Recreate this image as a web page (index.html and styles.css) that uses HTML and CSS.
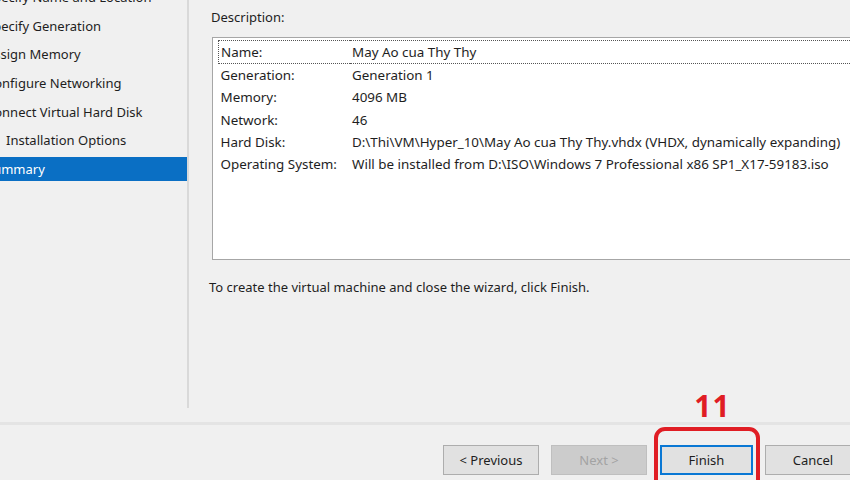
FILE: index.html
```html
<!DOCTYPE html>
<html lang="en">
<head>
    <meta charset="UTF-8">
    <title>New Virtual Machine Wizard - Summary</title>
    <link rel="stylesheet" href="styles.css">
</head>
<body>
    <div class="wizard">
        <div class="main">
            <!-- steps list -->
            <ul class="steps">
                <li class="first">Specify Name and Location</li>
                <li>Specify Generation</li>
                <li>Assign Memory</li>
                <li>Configure Networking</li>
                <li>Connect Virtual Hard Disk</li>
                <li class="indent">Installation Options</li>
                <li class="selected">Summary</li>
            </ul>

            <div class="content">
                <p class="label">Description:</p>
                <div class="summary-box">
                    <table class="summary">
                        <tr class="focused">
                            <td>Name:</td>
                            <td>May Ao cua Thy Thy</td>
                        </tr>
                        <tr>
                            <td>Generation:</td>
                            <td>Generation 1</td>
                        </tr>
                        <tr>
                            <td>Memory:</td>
                            <td>4096 MB</td>
                        </tr>
                        <tr>
                            <td>Network:</td>
                            <td>46</td>
                        </tr>
                        <tr>
                            <td>Hard Disk:</td>
                            <td>D:\Thi\VM\Hyper_10\May Ao cua Thy Thy.vhdx (VHDX, dynamically expanding)</td>
                        </tr>
                        <tr>
                            <td>Operating System:</td>
                            <td>Will be installed from D:\ISO\Windows 7 Professional x86 SP1_X17-59183.iso</td>
                        </tr>
                    </table>
                </div>
                <p class="hint">To create the virtual machine and close the wizard, click Finish.</p>
            </div>
        </div>

        <div class="footer">
            <button type="button">&lt; Previous</button>
            <button type="button" disabled>Next &gt;</button>
            <div class="marked">
                <span class="step-no">11</span>
                <button type="button" class="default">Finish</button>
            </div>
            <button type="button">Cancel</button>
        </div>
    </div>
</body>
</html>
```

FILE: styles.css
```css
body {
    margin: 0;
    background-color: #f0f0f0;
    font-family: "Noto Sans", "Open Sans", sans-serif;
    font-size: 13px;
    color: #1e1e1e;
    overflow: hidden;
}

.wizard {
    width: 850px;
    height: 480px;
    display: flex;
    flex-direction: column;
    overflow: hidden;
}

.main {
    display: flex;
    height: 408px;
    flex-shrink: 0;
}

/* 左側のステップ一覧 */
.steps {
    list-style: none;
    margin: 0;
    padding: 0;
    width: 187px;
    border-right: 2px solid #d9d9d9;
    overflow: hidden;
    margin-top: -17px;
    padding-bottom: 17px;
}

.steps li {
    height: 28.7px;
    line-height: 28.7px;
    margin-left: -14px;
    padding-left: 0;
    white-space: nowrap;
}

.steps li.indent {
    padding-left: 20px;
}

.steps li.selected {
    background-color: #0a6fc4;
    color: #fff;
    height: 24px;
    line-height: 24px;
    margin-top: 2px;
}

.content {
    flex: 1;
    padding-left: 22px;
    overflow: hidden;
}

.label {
    margin: 8px 0 0 0;
    line-height: 18px;
}

.summary-box {
    margin-top: 11px;
    margin-left: 1px;
    height: 219px;
    background-color: #fff;
    border: 1px solid #a6a6a6;
    border-right: none;
    padding: 2px 0 0 5px;
}

.summary {
    width: 100%;
    border-collapse: collapse;
    white-space: nowrap;
    font-size: 13.4px;
}

.summary td {
    height: 22.2px;
    padding: 0 0 0 2px;
    vertical-align: middle;
}

.summary td:first-child {
    width: 129px;
}

.summary tr.focused td {
    border-top: 1px dotted #555;
    border-bottom: 1px dotted #555;
}

.summary tr.focused td:first-child {
    border-left: 1px dotted #555;
}

.hint {
    margin: 18px 0 0 -2px;
    line-height: 18px;
}

/* 下部のボタン */
.footer {
    margin-top: 14px;
    border-top: 3px solid #e4e4e4;
    display: flex;
    justify-content: flex-end;
    align-items: flex-start;
    gap: 12px;
    padding-top: 20px;
    margin-right: -11px;
}

.footer button {
    width: 96px;
    height: 30px;
    font-family: inherit;
    font-size: 13px;
    color: #1e1e1e;
    background-color: #e1e1e1;
    border: 1px solid #adadad;
    padding: 0;
}

.footer button:disabled {
    color: #a3a3a3;
    background-color: #cccccc;
    border-color: #bfbfbf;
}

.footer button.default {
    width: 93px;
    border: 2px solid #0a78d4;
}

.marked {
    position: relative;
    margin-left: 1px;
}

/* 赤い注釈の枠と番号 */
.marked::before {
    content: "";
    position: absolute;
    left: -6px;
    right: -7px;
    top: -18px;
    height: 80px;
    border: 4px solid #e01d24;
    border-radius: 11px;
}

.step-no {
    position: absolute;
    left: 12px;
    right: 0;
    top: -60px;
    text-align: center;
    font-family: "Open Sans", "Noto Sans", sans-serif;
    font-weight: 700;
    font-size: 30px;
    letter-spacing: 1px;
    color: #e01d24;
}
```
